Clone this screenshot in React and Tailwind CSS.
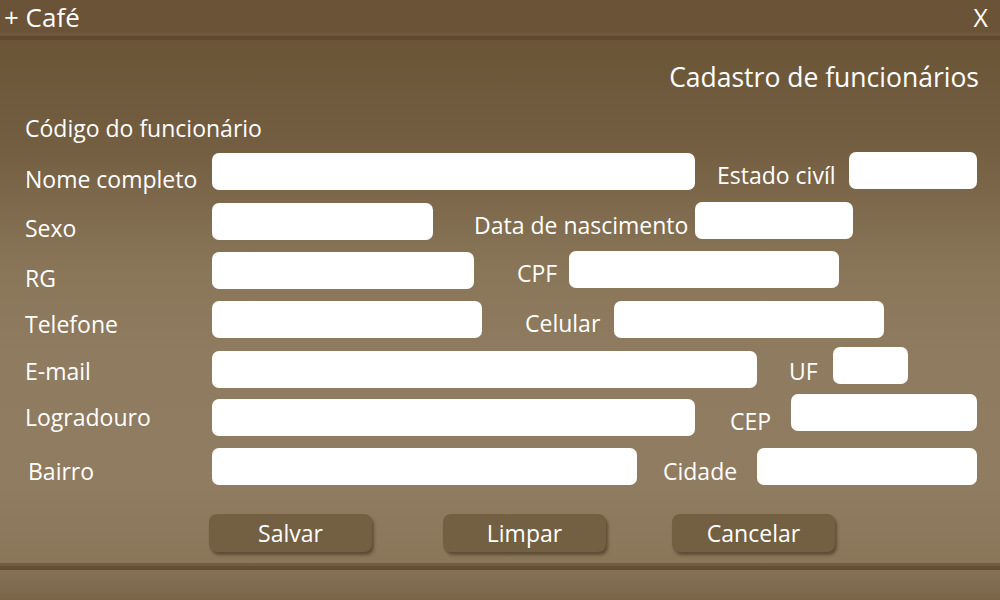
import React from 'react';

// Employee registration form, laid out as rows of label + field pairs
const Field = ({ className }) => (
    <input type="text" className={`bg-white rounded-[7px] h-[37px] outline-none border-0 shrink-0 ${className}`} />
);

const Label = ({ children, className }) => (
    <div className={`leading-[30px] text-[23px] whitespace-nowrap shrink-0 ${className}`}>{children}</div>
);

const Button = ({ children, className }) => (
    <button className={`h-[38px] w-[163px] rounded-[8px] bg-[#735f42] text-[23px] text-white shrink-0 shadow-[2px_3px_3px_rgba(40,25,10,0.45)] ${className}`}>
        {children}
    </button>
);

export default function App() {
    return (
        <div className="w-[1000px] h-[600px] flex flex-col text-white overflow-hidden" style={{ fontFamily: '"Open Sans", "Liberation Sans", sans-serif' }}>
            {/* Title bar */}
            <div className="h-[33px] bg-[#6a5336] flex items-center justify-between pl-[4px] pr-[12px]">
                <span className="text-[26px] leading-[30px]">+ Café</span>
                <span className="text-[25px] leading-[30px]">X</span>
            </div>
            <div className="h-[3px] bg-[#6f583b]" />
            <div className="h-[4px] bg-[#5e4a30]" />

            {/* Form panel */}
            <div className="flex-1 flex flex-col bg-[linear-gradient(to_bottom,#6b5537_0%,#735e41_20%,#8a7659_45%,#8f7b5f_60%,#907c60_85%,#8a7659_100%)]">
                <div className="mt-[22px] h-[30px] flex justify-end pr-[21px]">
                    <Label className="text-[26.5px]">Cadastro de funcionários</Label>
                </div>
                <div className="mt-[21px] h-[30px] pl-[25px]">
                    <Label>Código do funcionário</Label>
                </div>

                {/* Row 1 */}
                <div className="mt-[9px] h-[38px] flex items-start pl-[25px]">
                    <Label className="w-[187px] mt-[12px]">Nome completo</Label>
                    <Field className="w-[483px] mt-[1px]" />
                    <Label className="ml-[22px] w-[132px] mt-[8px]">Estado civíl</Label>
                    <Field className="w-[128px]" />
                </div>

                {/* Row 2 */}
                <div className="mt-[12px] h-[38px] flex items-start pl-[25px]">
                    <Label className="w-[187px] mt-[11px]">Sexo</Label>
                    <Field className="w-[221px] mt-[1px]" />
                    <Label className="ml-[41px] w-[221px] mt-[8px]">Data de nascimento</Label>
                    <Field className="w-[158px]" />
                </div>

                {/* Row 3 */}
                <div className="mt-[11px] h-[38px] flex items-start pl-[25px]">
                    <Label className="w-[187px] mt-[12px]">RG</Label>
                    <Field className="w-[262px] mt-[1px]" />
                    <Label className="ml-[43px] w-[52px] mt-[7px]">CPF</Label>
                    <Field className="w-[270px]" />
                </div>

                {/* Row 4 */}
                <div className="mt-[12px] h-[37px] flex items-start pl-[25px]">
                    <Label className="w-[187px] mt-[8px]">Telefone</Label>
                    <Field className="w-[270px]" />
                    <Label className="ml-[43px] w-[89px] mt-[7px]">Celular</Label>
                    <Field className="w-[270px]" />
                </div>

                {/* Row 5 */}
                <div className="mt-[9px] h-[40px] flex items-start pl-[25px]">
                    <Label className="w-[187px] mt-[9px]">E-mail</Label>
                    <Field className="w-[545px] mt-[4px]" />
                    <Label className="ml-[32px] w-[44px] mt-[9px]">UF</Label>
                    <Field className="w-[75px]" />
                </div>

                {/* Row 6 */}
                <div className="mt-[7px] h-[42px] flex items-start pl-[25px]">
                    <Label className="w-[187px] mt-[8px]">Logradouro</Label>
                    <Field className="w-[483px] mt-[5px]" />
                    <Label className="ml-[35px] w-[61px] mt-[12px]">CEP</Label>
                    <Field className="w-[186px]" />
                </div>

                {/* Row 7 */}
                <div className="mt-[12px] h-[37px] flex items-start pl-[28px]">
                    <Label className="w-[184px] mt-[8px]">Bairro</Label>
                    <Field className="w-[425px]" />
                    <Label className="ml-[26px] w-[94px] mt-[8px]">Cidade</Label>
                    <Field className="w-[220px]" />
                </div>

                {/* Actions */}
                <div className="mt-[29px] h-[38px] flex items-start pl-[209px]">
                    <Button>Salvar</Button>
                    <Button className="ml-[71px] w-[162px]">Limpar</Button>
                    <Button className="ml-[66px]">Cancelar</Button>
                </div>
            </div>

            {/* Bottom bar */}
            <div className="h-[3px] bg-[#735d40]" />
            <div className="h-[4px] bg-[#654f34]" />
            <div className="h-[30px] bg-[linear-gradient(to_bottom,#857256,#7a6548)]" />
        </div>
    );
}
